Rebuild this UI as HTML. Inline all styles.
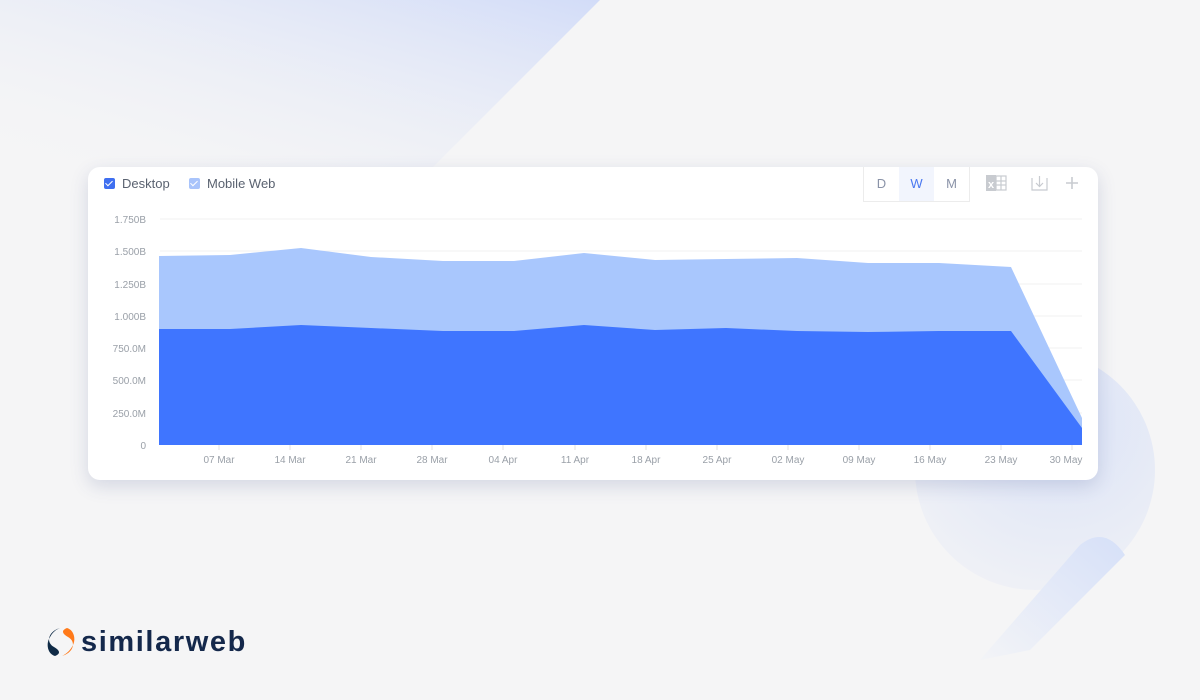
<!DOCTYPE html>
<html><head><meta charset="utf-8"><style>
html,body{margin:0;padding:0;}
body{width:1200px;height:700px;background:#f5f5f6;position:relative;overflow:hidden;font-family:"Liberation Sans",sans-serif;}
.card{position:absolute;left:88px;top:167px;width:1010px;height:313px;background:#fff;border-radius:12px;box-shadow:0 6px 18px rgba(60,80,140,0.18);}
.leg{position:absolute;top:176px;font-size:13px;color:#5a6270;display:flex;align-items:center;}
.cb{width:11px;height:11px;border-radius:2px;margin-right:7px;position:relative;}
.cb:after{content:"";position:absolute;left:3px;top:1px;width:3px;height:6px;border:solid #fff;border-width:0 1.5px 1.5px 0;transform:rotate(45deg);}
.dwm{position:absolute;left:863px;top:167px;height:34px;display:flex;border:1px solid #ececec;border-top:none;}
.dwm div{width:35px;text-align:center;line-height:34px;font-size:13px;color:#8a93a8;}
.dwm div.on{background:#f2f5fd;color:#4a78f0;}
</style></head><body>
<svg width="1200" height="700" style="position:absolute;left:0;top:0">
<defs>
<linearGradient id="g1" x1="0" y1="1" x2="1" y2="0"><stop offset="0" stop-color="#f5f5f6" stop-opacity="0"/><stop offset="1" stop-color="#d2dcf8"/></linearGradient>
<radialGradient id="g2" cx="0.6" cy="0.3" r="0.8"><stop offset="0" stop-color="#dbe3f7"/><stop offset="1" stop-color="#f1f2f6"/></radialGradient>
<linearGradient id="g3" x1="1" y1="0" x2="0" y2="1"><stop offset="0" stop-color="#d6e0f8"/><stop offset="1" stop-color="#f3f4f7"/></linearGradient>
</defs>
<polygon points="0,0 600,0 430,170 0,170" fill="url(#g1)"/>
<circle cx="1035" cy="470" r="120" fill="url(#g2)"/>
<path d="M1125 555 L1030 650 L980 660 L1080 545 Q1105 525 1125 555 Z" fill="url(#g3)"/>
</svg>
<div class="card"></div>
<div class="leg" style="left:104px"><span class="cb" style="background:#3f6ff0"></span>Desktop</div>
<div class="leg" style="left:189px"><span class="cb" style="background:#a9c4fb"></span>Mobile Web</div>
<div class="dwm"><div>D</div><div class="on">W</div><div>M</div></div>
<svg width="1200" height="700" style="position:absolute;left:0;top:0">
<g fill="#c8cbd0"><rect x="986" y="175" width="10" height="16"/></g>
<text x="988" y="188" font-size="11" font-weight="bold" fill="#fff" font-family="Liberation Sans">x</text>
<g stroke="#c8cbd0" stroke-width="1.2" fill="none"><rect x="996" y="176" width="10" height="14"/><line x1="996" y1="181" x2="1006" y2="181"/><line x1="996" y1="185" x2="1006" y2="185"/><line x1="1001" y1="176" x2="1001" y2="190"/>
<path d="M1032 178 V190 H1047 V178"/><path d="M1039.5 176 V186 M1036 183 L1039.5 186.5 L1043 183"/>
<path d="M1072 177 V189 M1066 183 H1078" stroke-width="1.6"/></g>
<g stroke="#f0f0f2" stroke-width="1">
<line x1="160" y1="219" x2="1082" y2="219"/><line x1="160" y1="251" x2="1082" y2="251"/><line x1="160" y1="284" x2="1082" y2="284"/><line x1="160" y1="316" x2="1082" y2="316"/><line x1="160" y1="348" x2="1082" y2="348"/><line x1="160" y1="380" x2="1082" y2="380"/><line x1="160" y1="413" x2="1082" y2="413"/></g>
<polygon fill="#a9c7fd" points="159,445 159,256 230,255 301,248 371,257 443,261 514,261 584,253 655,260 726,259 797,258 868,263 939,263 1011,267 1082,418 1082,445"/>
<polygon fill="#3f75ff" points="159,445 159,329 230,329 301,325 371,328 443,331 514,331 584,325 655,330 726,328 797,331 868,332 939,331 1011,331 1082,428 1082,445"/>
<g font-size="10" fill="#9aa0a8" font-family="Liberation Sans" text-anchor="end">
<text x="146" y="223">1.750B</text><text x="146" y="255">1.500B</text><text x="146" y="288">1.250B</text><text x="146" y="320">1.000B</text><text x="146" y="352">750.0M</text><text x="146" y="384">500.0M</text><text x="146" y="417">250.0M</text><text x="146" y="449">0</text></g>
<g stroke="#e0e0e0"><line x1="219" y1="445" x2="219" y2="450"/><line x1="290" y1="445" x2="290" y2="450"/><line x1="361" y1="445" x2="361" y2="450"/><line x1="432" y1="445" x2="432" y2="450"/><line x1="503" y1="445" x2="503" y2="450"/><line x1="575" y1="445" x2="575" y2="450"/><line x1="646" y1="445" x2="646" y2="450"/><line x1="717" y1="445" x2="717" y2="450"/><line x1="788" y1="445" x2="788" y2="450"/><line x1="859" y1="445" x2="859" y2="450"/><line x1="930" y1="445" x2="930" y2="450"/><line x1="1001" y1="445" x2="1001" y2="450"/><line x1="1072" y1="445" x2="1072" y2="450"/></g>
<g font-size="10" fill="#9aa0a8" font-family="Liberation Sans" text-anchor="middle">
<text x="219" y="463">07 Mar</text><text x="290" y="463">14 Mar</text><text x="361" y="463">21 Mar</text><text x="432" y="463">28 Mar</text><text x="503" y="463">04 Apr</text><text x="575" y="463">11 Apr</text><text x="646" y="463">18 Apr</text><text x="717" y="463">25 Apr</text><text x="788" y="463">02 May</text><text x="859" y="463">09 May</text><text x="930" y="463">16 May</text><text x="1001" y="463">23 May</text><text x="1066" y="463">30 May</text></g>
<path d="M60 628 C49 631 45 642 54 647 C61 651 60 654 55 656 C48 654 46 645 49 639 C52 633 55 630 60 628 Z" fill="#0f2a46"/>
<path d="M62 656 C73 653 77 642 68 637 C61 633 62 630 67 628 C74 630 76 639 73 645 C70 651 66 654 62 656 Z" fill="#ff7a1a"/>
<text x="81" y="651" font-size="29" font-weight="bold" fill="#14284b" font-family="Liberation Sans" letter-spacing="1.6">similarweb</text>
</svg>
</body></html>
